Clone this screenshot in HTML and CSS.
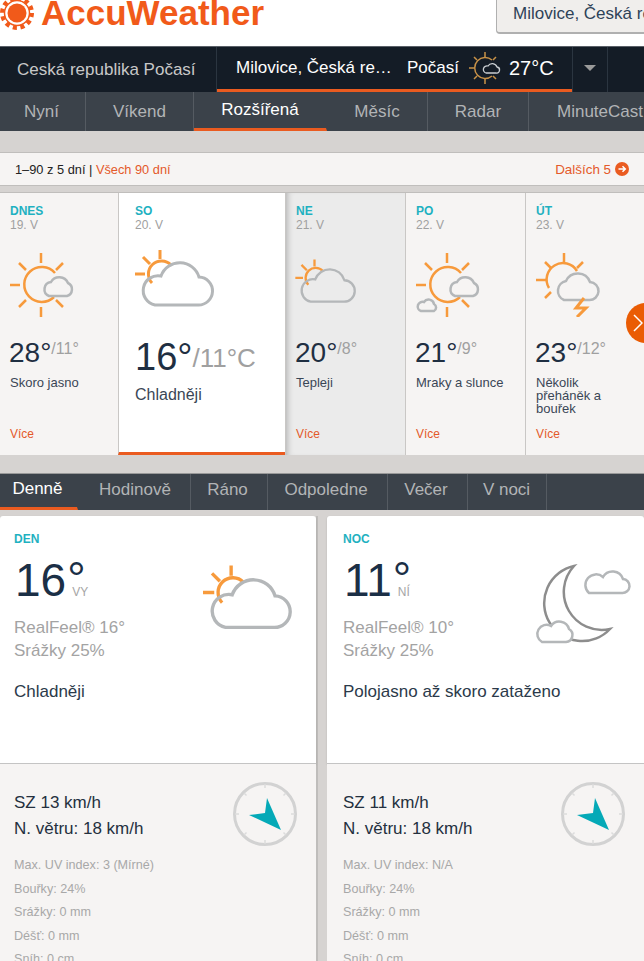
FILE: index.html
```html
<!DOCTYPE html>
<html lang="cs">
<head>
    <meta charset="UTF-8">
    <title>Milovice - AccuWeather</title>
    <link rel="stylesheet" href="styles.css">
</head>
<body>
    <svg class="sprite" xmlns="http://www.w3.org/2000/svg">
        <symbol id="partly" viewBox="0 0 80 60">
            <g class="sun-line">
                <path d="M25 2V11M8 9L15 16M0 26H10"/>
                <path d="M17 35A12 12 0 1 1 36 17"/>
            </g>
            <path class="cloud-line" d="M20 57H63A14 14 0 0 0 64 29A20 20 0 0 0 26 28A14.5 14.5 0 0 0 20 57Z"/>
        </symbol>
        <symbol id="sunny-cloud" viewBox="0 0 64 64">
            <g class="sun-line thin">
                <path d="M31 0V10M31 54V64M0 32H10M9 10L16 17M53 10L46 17M9 54L16 47M53 54L46 47"/>
                <path d="M45 20A17.5 17.5 0 1 0 44 44"/>
            </g>
            <path class="cloud-line thin" d="M39 43H57A7 7 0 0 0 58 30A9.500 9.500 0 0 0 41 29A7.300 7.300 0 0 0 39 43Z"/>
        </symbol>
        <symbol id="sunny-clouds" viewBox="0 0 64 64">
            <g class="sun-line thin">
                <path d="M31 0V10M31 54V64M0 32H10M9 10L16 17M53 10L46 17M46 47L53 54"/>
                <path d="M45 20A17.500 17.500 0 1 0 44 44"/>
            </g>
            <path class="cloud-line thin" d="M39 43H57A7 7 0 0 0 58 30A9.500 9.500 0 0 0 41 29A7.300 7.300 0 0 0 39 43Z"/>
            <path class="cloud-line thin" d="M5 58H18A4 4 0 0 0 18 51A5.500 5.500 0 0 0 8 49A4.600 4.600 0 0 0 5 58Z"/>
        </symbol>
        <symbol id="storm" viewBox="0 0 64 64">
            <g class="sun-line thin">
                <path d="M28 0V10M0 27H10M9 9L15 15M47 9L41 15M9 45L15 39"/>
                <path d="M13 35A16 16 0 1 1 41 18"/>
            </g>
            <path class="cloud-line thin" d="M28 47H53A9 9 0 0 0 54 29A13 13 0 0 0 30 28A10 10 0 0 0 28 47Z"/>
            <path class="sun-line" d="M48 45L40 55L50 55L41 64"/>
        </symbol>
        <symbol id="nav-sun" viewBox="0 0 32 32">
            <path class="nav-ray" d="M16 0V5M16 27V32M0 16H5M5 5L8 8M27 5L24 8M5 27L8 24M27 27L24 24"/>
            <path class="nav-ray" d="M23 8A10.500 10.500 0 1 0 23 24"/>
            <path class="nav-cloud" d="M17 21H27A3 3 0 0 0 28 15A5 5 0 0 0 19 14A3.600 3.600 0 0 0 17 21Z"/>
        </symbol>
        <symbol id="moon" viewBox="0 0 100 82">
            <path class="moon-line" d="M41 2A38 38 0 1 0 77 65A38 38 0 0 1 41 2Z"/>
            <path class="cloud-line thin" d="M56 29H89A7 7 0 0 0 90 15A11 11 0 0 0 70 13A9 9 0 0 0 56 29Z"/>
            <path class="cloud-line thin fill" d="M9 78H33A7 7 0 0 0 36 65A10 10 0 0 0 18 62A9 9 0 0 0 9 78Z"/>
        </symbol>
        <symbol id="wind" viewBox="0 0 64 64">
            <circle class="dial" cx="32" cy="32" r="30.500"/>
            <path class="dial-tick" d="M32 2V6M32 58V62M2 32H6M58 32H62M11 11L13.500 13.500M53 11L50.500 13.500M11 53L13.500 50.500M53 53L50.500 50.500"/>
            <path class="dial-arrow" d="M34 16L48 48L16 33L32 31Z"/>
        </symbol>
    </svg>

    <div class="page">
        <header class="top">
            <div class="logo">
                <svg class="logo-sun" viewBox="0 0 34 34">
                    <circle class="logo-teeth" cx="17" cy="17" r="14.500"/>
                    <circle class="logo-ring" cx="17" cy="17" r="12.500"/>
                    <circle class="logo-disc" cx="17" cy="17" r="9.500"/>
                </svg>
                <span class="logo-text">AccuWeather</span>
            </div>
            <div class="search">Milovice, Česká republika</div>
        </header>

        <nav class="nav-dark">
            <a class="nav-country">Ceská republika Počasí</a>
            <a class="nav-city">
                <span class="nav-city-name">Milovice, Česká re…</span>
                <span>Počasí</span>
                <svg class="nav-icon"><use href="#nav-sun"/></svg>
                <span class="nav-temp">27°C</span>
            </a>
            <a class="nav-caret"><span class="caret"></span></a>
        </nav>

        <nav class="tabs tabs-main">
            <a class="tab w-nyni">Nyní</a>
            <a class="tab w-vikend">Víkend</a>
            <a class="tab w-rozsirena active">Rozšířená</a>
            <a class="tab w-mesic">Měsíc</a>
            <a class="tab w-radar">Radar</a>
            <a class="tab w-minute">MinuteCast</a>
        </nav>

        <div class="range">
            <span>1–90 z 5 dní | <a class="link">Všech 90 dní</a></span>
            <a class="link next">Dalších 5
                <svg class="next-icon" viewBox="0 0 14 14">
                    <circle cx="7" cy="7" r="7"/>
                    <path d="M3.500 7H10M7.500 4.200L10.300 7L7.500 9.800"/>
                </svg>
            </a>
        </div>

        <section class="days">
            <article class="day">
                <div class="day-name">DNES</div>
                <div class="day-date">19. V</div>
                <svg class="day-icon"><use href="#sunny-cloud"/></svg>
                <div class="day-temp">28°<small>/11°</small></div>
                <div class="day-text">Skoro jasno</div>
                <a class="link more">Více</a>
            </article>
            <article class="day selected">
                <div class="day-name">SO</div>
                <div class="day-date">20. V</div>
                <svg class="day-icon"><use href="#partly"/></svg>
                <div class="day-temp">16°<small>/11°C</small></div>
                <div class="day-text">Chladněji</div>
            </article>
            <article class="day hovered">
                <div class="day-name">NE</div>
                <div class="day-date">21. V</div>
                <svg class="day-icon"><use href="#partly"/></svg>
                <div class="day-temp">20°<small>/8°</small></div>
                <div class="day-text">Tepleji</div>
                <a class="link more">Více</a>
            </article>
            <article class="day">
                <div class="day-name">PO</div>
                <div class="day-date">22. V</div>
                <svg class="day-icon"><use href="#sunny-clouds"/></svg>
                <div class="day-temp">21°<small>/9°</small></div>
                <div class="day-text">Mraky a slunce</div>
                <a class="link more">Více</a>
            </article>
            <article class="day">
                <div class="day-name">ÚT</div>
                <div class="day-date">23. V</div>
                <svg class="day-icon"><use href="#storm"/></svg>
                <div class="day-temp">23°<small>/12°</small></div>
                <div class="day-text">Několik přeháněk a bouřek</div>
                <a class="link more">Více</a>
            </article>
            <a class="days-next">
                <svg viewBox="0 0 10 18"><path d="M1 1L9 9L1 17"/></svg>
            </a>
        </section>

        <nav class="tabs tabs-sub">
            <a class="tab w-denne active">Denně</a>
            <a class="tab w-hodinove">Hodinově</a>
            <a class="tab w-rano">Ráno</a>
            <a class="tab w-odpoledne">Odpoledne</a>
            <a class="tab w-vecer">Večer</a>
            <a class="tab w-noci">V noci</a>
        </nav>

        <section class="details">
            <article class="detail">
                <div class="detail-top">
                    <div class="detail-head">
                        <div>
                            <div class="day-name">DEN</div>
                            <div class="big-temp">
                                <span>16</span>
                                <span class="big-side"><span class="big-deg">°</span><small>VY</small></span>
                            </div>
                            <div class="feel">RealFeel® 16°</div>
                            <div class="feel">Srážky 25%</div>
                        </div>
                        <svg class="detail-icon"><use href="#partly"/></svg>
                    </div>
                    <div class="detail-text">Chladněji</div>
                </div>
                <div class="detail-bottom">
                    <div class="wind-row">
                        <div>
                            <div class="wind-text">SZ 13 km/h</div>
                            <div class="wind-text">N. větru: 18 km/h</div>
                        </div>
                        <svg class="wind-icon"><use href="#wind"/></svg>
                    </div>
                    <ul class="stats">
                        <li>Max. UV index: 3 (Mírné)</li>
                        <li>Bouřky: 24%</li>
                        <li>Srážky: 0 mm</li>
                        <li>Déšť: 0 mm</li>
                        <li>Sníh: 0 cm</li>
                    </ul>
                </div>
            </article>
            <article class="detail">
                <div class="detail-top">
                    <div class="detail-head">
                        <div>
                            <div class="day-name">NOC</div>
                            <div class="big-temp">
                                <span>11</span>
                                <span class="big-side"><span class="big-deg">°</span><small>NÍ</small></span>
                            </div>
                            <div class="feel">RealFeel® 10°</div>
                            <div class="feel">Srážky 25%</div>
                        </div>
                        <svg class="moon-icon"><use href="#moon"/></svg>
                    </div>
                    <div class="detail-text">Polojasno až skoro zataženo</div>
                </div>
                <div class="detail-bottom">
                    <div class="wind-row">
                        <div>
                            <div class="wind-text">SZ 11 km/h</div>
                            <div class="wind-text">N. větru: 18 km/h</div>
                        </div>
                        <svg class="wind-icon"><use href="#wind"/></svg>
                    </div>
                    <ul class="stats">
                        <li>Max. UV index: N/A</li>
                        <li>Bouřky: 24%</li>
                        <li>Srážky: 0 mm</li>
                        <li>Déšť: 0 mm</li>
                        <li>Sníh: 0 cm</li>
                    </ul>
                </div>
            </article>
        </section>
    </div>
</body>
</html>
```
FILE: styles.css
```css
* {
    box-sizing: border-box;
}

html, body {
    margin: 0;
    height: 961px;
    overflow: hidden;
}

body {
    background: #d6d3d1;
    font-family: "Liberation Sans", Arial, sans-serif;
    color: #2b3a4a;
}

.sprite {
    display: none;
}

.page {
    width: 644px;
    height: 961px;
    overflow: hidden;
    position: relative;
}

/* icon strokes */
.sun-line {
    fill: none;
    stroke: #f79a3c;
    stroke-width: 3;
}

.sun-line.thin {
    stroke-width: 2.500;
}

.cloud-line {
    fill: none;
    stroke: #b4b7b9;
    stroke-width: 3;
}

.cloud-line.thin {
    stroke-width: 2.500;
}

.cloud-line.fill {
    fill: #fff;
}

.moon-line {
    fill: #fff;
    stroke: #8d8d8d;
    stroke-width: 2.500;
}

.nav-ray {
    fill: none;
    stroke: #c89248;
    stroke-width: 1.500;
}

.nav-cloud {
    fill: #141c26;
    stroke: #c9cdd1;
    stroke-width: 1.300;
}

.dial {
    fill: none;
    stroke: #d2d2d2;
    stroke-width: 3;
}

.dial-tick {
    stroke: #dcdcdc;
    stroke-width: 1.500;
}

.dial-arrow {
    fill: #04a9b7;
}

/* header */
.top {
    height: 46px;
    background: #fff;
    display: flex;
    justify-content: space-between;
}

.logo {
    display: flex;
    align-items: flex-start;
    margin-top: -4px;
}

.logo-sun {
    width: 34px;
    height: 34px;
    margin-right: 7px;
}

.logo-teeth {
    fill: none;
    stroke: #f15a1a;
    stroke-width: 5;
    stroke-dasharray: 4 3.590;
}

.logo-ring {
    fill: #fff;
    stroke: #f15a1a;
    stroke-width: 1.500;
}

.logo-disc {
    fill: #f15a1a;
}

.logo-text {
    font-size: 35px;
    font-weight: bold;
    color: #f15a1a;
    line-height: 34px;
}

.search {
    width: 148px;
    height: 38px;
    margin-top: -4px;
    padding: 7px 0 0 16px;
    background: #f0eeec;
    border: 1px solid #b0b0b0;
    border-right: none;
    border-bottom-width: 2px;
    border-radius: 4px 0 0 4px;
    font-size: 17px;
    white-space: nowrap;
    overflow: hidden;
    color: #2e4258;
}

/* dark nav */
.nav-dark {
    height: 46px;
    background: #141c26;
    border-top: 1px solid #5a6068;
    display: flex;
    font-size: 17px;
}

.nav-country {
    width: 217px;
    padding: 13px 0 0 17px;
    color: #c8c8c8;
    border-right: 1px solid #2b3540;
}

.nav-city {
    width: 355px;
    padding-left: 19px;
    display: flex;
    align-items: center;
    color: #fff;
    border-bottom: 3px solid #ea5b20;
}

.nav-city-name {
    width: 171px;
    white-space: nowrap;
}

.nav-icon {
    width: 32px;
    height: 32px;
    margin: 0 8px 0 10px;
}

.nav-temp {
    font-size: 20px;
}

.nav-caret {
    width: 36px;
    border-left: 1px solid #2b3540;
    border-right: 1px solid #2b3540;
    display: flex;
    justify-content: center;
    align-items: center;
}

.caret {
    width: 0;
    height: 0;
    border-left: 6px solid transparent;
    border-right: 6px solid transparent;
    border-top: 6px solid #9a9a9a;
    margin-bottom: 3px;
}

/* tab bars */
.tabs {
    background: #3b424a;
    display: flex;
    font-size: 17px;
    color: #b2b4b6;
    white-space: nowrap;
}

.tabs-main {
    height: 39px;
}

.tabs-sub {
    height: 37px;
    margin-top: 18px;
    border-top: 1px solid #999;
}

.tab {
    display: flex;
    justify-content: center;
    align-items: center;
    flex: none;
    border-right: 1px solid #555b62;
}

.tabs-main .tab {
    padding-top: 1px;
}

.tabs-sub .tab {
    padding-bottom: 4px;
}

.tab.active {
    color: #fff;
    border-bottom: 3px solid #ea5b20;
    border-right-color: transparent;
}

.tabs-main .tab.active {
    padding-top: 0;
}

.tabs-sub .tab.active {
    padding: 0 2px 3px 0;
}

.w-nyni { width: 86px; padding-right: 2px; }
.w-vikend { width: 108px; }
.w-rozsirena { width: 133px; }
.w-mesic { width: 101px; }
.w-radar { width: 101px; }
.w-minute { width: 115px; padding-left: 28px; justify-content: flex-start; border-right: none; }
.w-denne { width: 78px; }
.w-hodinove { width: 113px; padding-left: 2px; }
.w-rano { width: 77px; padding-right: 3px; }
.w-odpoledne { width: 120px; padding-right: 3px; }
.w-vecer { width: 80px; padding-right: 3px; }
.w-noci { width: 79px; padding-right: 1px; }

/* range bar */
.range {
    height: 34px;
    margin-top: 21px;
    padding: 0 15px;
    background: #f6f4f3;
    border-top: 1px solid #c0bebc;
    border-bottom: 1px solid #c0bebc;
    display: flex;
    justify-content: space-between;
    align-items: center;
    font-size: 12.800px;
    color: #222;
}

.link {
    color: #e4592a;
}

.next {
    display: flex;
    align-items: center;
    gap: 4px;
    font-size: 13.400px;
}

.next-icon {
    width: 14px;
    height: 14px;
}

.next-icon circle {
    fill: #ea5b20;
}

.next-icon path {
    fill: none;
    stroke: #fff;
    stroke-width: 1.500;
}

/* five day strip */
.days {
    height: 263px;
    margin-top: 6px;
    display: grid;
    grid-template-columns: 118px 167px 120px 120px 119px;
    position: relative;
    border-top: 1px solid #c0bebc;
}

.day {
    padding: 11px 15px 14px 10px;
    background: #f6f4f3;
    display: flex;
    flex-direction: column;
    border-left: 1px solid #c9c7c5;
}

.day:first-child {
    border-left: none;
}

.day-name {
    font-size: 12px;
    font-weight: bold;
    line-height: 14px;
    color: #1fb1c1;
}

.day-date {
    font-size: 12px;
    line-height: 15px;
    color: #a0a0a0;
}

.day-icon {
    width: 64px;
    height: 64px;
    margin-top: 20px;
}

.day-temp {
    margin-top: 16px;
    font-size: 28px;
    line-height: 32px;
    color: #1f2f42;
    white-space: nowrap;
    margin-left: -1px;
}

.day-temp small {
    font-size: 16px;
    color: #a0a0a0;
    vertical-align: 8px;
}

.day-text {
    margin-top: 7px;
    font-size: 13px;
    line-height: 13px;
    color: #3a4656;
}

.more {
    margin-top: auto;
    font-size: 12px;
    line-height: 14px;
}

.selected {
    background: #fff;
    padding-left: 16px;
    border-bottom: 3px solid #ea5b20;
}

.selected .day-icon {
    width: 80px;
    height: 60px;
    margin-top: 15px;
}

.selected .day-temp {
    margin-top: 27px;
    margin-left: 0;
    font-size: 38px;
    line-height: 44px;
}

.selected .day-temp small {
    font-size: 26px;
    vertical-align: 3px;
}

.selected .day-text {
    margin-top: 6px;
    font-size: 16px;
    line-height: 18px;
}

.hovered {
    background: #ebebeb;
    box-shadow: inset 6px 0 6px -5px #aaa;
}

.hovered .day-icon {
    width: 62px;
    height: 46px;
    margin: 25px 0 0 -1px;
}

.hovered .day-temp {
    margin-top: 29px;
}

.days-next {
    position: absolute;
    left: 626px;
    top: 110px;
    width: 40px;
    height: 40px;
    border-radius: 50%;
    background: #ea5c04;
    padding: 11px 0 0 7px;
}

.days-next svg {
    display: block;
    width: 10px;
    height: 18px;
    fill: none;
    stroke: #fff;
    stroke-width: 1.500;
}

/* day and night cards */
.details {
    margin-top: 6px;
    display: grid;
    grid-template-columns: 316px 317px;
    gap: 11px;
}

.detail {
    height: 460px;
    box-shadow: 2px 0 0 #bfbdbb;
}

.detail + .detail {
    box-shadow: none;
}

.detail-top {
    height: 248px;
    padding: 16px 14px 0;
    background: #fff;
    border-bottom: 1px solid #c4c4c4;
    border-radius: 3px 3px 0 0;
    box-shadow: 0 1px 2px rgba(0, 0, 0, 0.15);
}

.detail + .detail .detail-top,
.detail + .detail .detail-bottom {
    padding-left: 16px;
}

.detail-head {
    display: flex;
    justify-content: space-between;
    height: 150px;
}

.detail-icon {
    width: 90px;
    height: 68px;
    margin: 31px 9px 0 0;
}

.moon-icon {
    width: 100px;
    height: 82px;
    margin: 32px -3px 0 0;
}

.big-temp {
    margin: 10px 0 12px;
    font-size: 46px;
    line-height: 48px;
    color: #1b2f46;
    white-space: nowrap;
    display: flex;
}

.big-temp > span:first-child {
    margin-left: 1px;
}

.big-side {
    display: flex;
    flex-direction: column;
    margin-top: 18px;
    margin-left: 1px;
}

.big-deg {
    line-height: 11px;
    height: 11px;
}

.big-side small {
    margin-left: 5px;
    font-size: 12px;
    line-height: 14px;
    color: #a5a5a5;
}

.feel {
    font-size: 17px;
    line-height: 23px;
    color: #a3a3a3;
}

.detail-text {
    font-size: 17px;
    line-height: 20px;
    color: #2b3a4a;
}

.detail-bottom {
    height: 212px;
    padding: 26px 14px 0;
    background: #f6f4f3;
}

.wind-row {
    display: flex;
    justify-content: space-between;
    height: 64px;
}

.wind-text {
    font-size: 17px;
    line-height: 26px;
    color: #24303e;
}

.wind-icon {
    width: 64px;
    height: 64px;
    margin: -8px 5px 0 0;
}

.stats {
    list-style: none;
    margin: 0;
    padding: 0;
    font-size: 12.600px;
    line-height: 23.500px;
    color: #a8a8a8;
}
```
